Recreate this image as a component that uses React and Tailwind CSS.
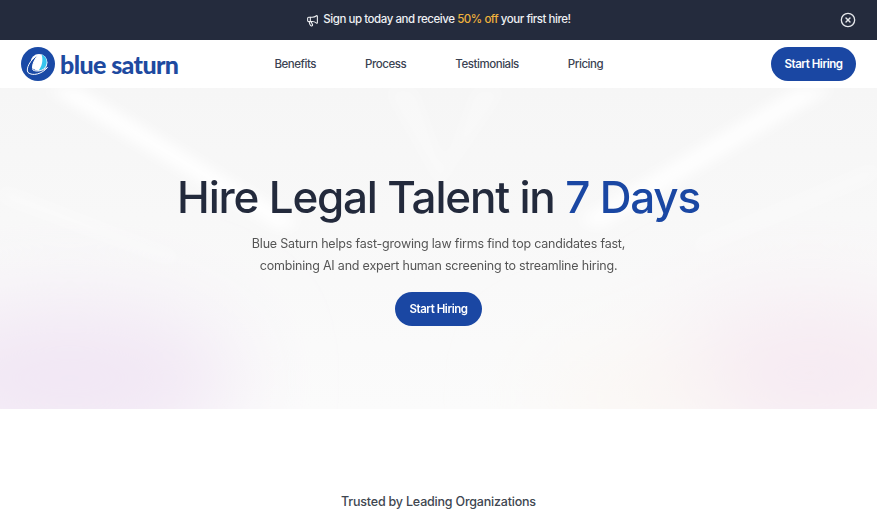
import React from 'react';
import { Megaphone, CircleX } from 'lucide-react';

const links = ['Benefits', 'Process', 'Testimonials', 'Pricing'];

const Logo = () => (
  <div className="flex items-center gap-[5px]">
    <svg width="34" height="34" viewBox="0 0 34 34">
      <circle cx="17" cy="17" r="17" fill="#1a4aa6" />
      <circle cx="18" cy="15.5" r="8.5" fill="#fff" />
      <path d="M20.5 7.5 C25.5 9.5 27 15 24.5 19.5 C22.5 22.5 19.5 23.5 17.5 23.5 C21 19.5 22.5 13 20.5 7.5Z" fill="#35c6ee" />
      <path d="M7 25.5 C4.5 22 9 12.5 17 8 C12.5 13.5 10.5 19.5 12 23 C15.5 25 21.5 24 26.5 20.5 C21 27 11.5 29.5 7 25.5Z" fill="#1a4aa6" stroke="#fff" strokeWidth="1" />
    </svg>
    <span className="font-['Lato'] text-[25px] font-black leading-none tracking-[-0.6px] text-[#1e4aa0]">blue saturn</span>
  </div>
);

const HeroBackground = () => (
  <svg className="absolute inset-0 h-full w-full" viewBox="0 0 877 321" preserveAspectRatio="none">
    <defs>
      <filter id="soft" x="-20%" y="-20%" width="140%" height="140%">
        <feGaussianBlur stdDeviation="7" />
      </filter>
      <filter id="glow" x="-50%" y="-50%" width="200%" height="200%">
        <feGaussianBlur stdDeviation="45" />
      </filter>
    </defs>
    <g filter="url(#glow)">
      <ellipse cx="70" cy="290" rx="170" ry="75" fill="#f1e6f4" />
      <ellipse cx="810" cy="285" rx="150" ry="75" fill="#f6eaf2" />
      <ellipse cx="640" cy="310" rx="100" ry="40" fill="#fbf6f2" />
    </g>
    <g filter="url(#soft)" fill="#ffffff">
      <polygon points="45,0 78,0 300,135 280,142" />
      <polygon points="0,98 0,112 170,175 182,168" opacity="0.4" />
      <polygon points="797,0 835,0 600,140 578,132" opacity="0.9" />
      <polygon points="877,75 877,90 700,165 690,155" opacity="0.35" />
      <polygon points="385,0 415,0 445,80 475,0 505,0 440,100" opacity="0.3" />
    </g>
  </svg>
);

export default function App() {
  return (
    <div className="min-h-screen bg-white font-['Inter',sans-serif]">
      <div className="relative flex h-10 items-center justify-center gap-[4px] bg-[#242b3d] text-[11.5px] font-medium tracking-[-0.45px] text-[#eef0f3]">
        <Megaphone size={13} />
        <span>
          Sign up today and receive <span className="text-[#f0b23c]">50% off</span> your first hire!
        </span>
        <button className="absolute right-[21px] top-[12px] text-[#e5e7eb]">
          <CircleX size={16} />
        </button>
      </div>

      <nav className="flex h-12 items-center justify-between px-[21px]">
        <div className="flex items-center">
          <Logo />
          <div className="ml-[96px] flex items-center gap-[49px] pt-px text-[11.5px] font-medium tracking-[-0.45px] text-[#3a4252]">
            {links.map((l) => (
              <a key={l} href="#">{l}</a>
            ))}
          </div>
        </div>
        <button className="h-[34px] w-[85px] rounded-full bg-[#1a47a3] pt-px text-[11.5px] font-semibold tracking-[-0.45px] text-white">Start Hiring</button>
      </nav>

      <section className="relative h-[321px] overflow-hidden bg-gradient-to-b from-[#f6f6f6] to-[#fbfbfb]">
        <HeroBackground />
        <div className="relative flex flex-col items-center pt-[82px]">
          <h1 className="text-[44px] font-medium leading-[54px] tracking-[-1.2px] text-[#232a3c]">
            Hire Legal Talent in <span className="text-[#1a47a3]">7 Days</span>
          </h1>
          <p className="mt-[9px] text-center text-[12.5px] leading-[22px] tracking-[-0.2px] text-[#555555]">
            Blue Saturn helps fast-growing law firms find top candidates fast,
            <br />
            combining AI and expert human screening to streamline hiring.
          </p>
          <button className="mt-[15px] h-[34px] w-[87px] rounded-full bg-[#1a47a3] pt-px text-[11.5px] font-semibold tracking-[-0.45px] text-white">Start Hiring</button>
        </div>
      </section>

      <p className="pt-[84px] text-center text-[12.5px] font-medium leading-[18px] tracking-[-0.2px] text-[#404650]">Trusted by Leading Organizations</p>
    </div>
  );
}
